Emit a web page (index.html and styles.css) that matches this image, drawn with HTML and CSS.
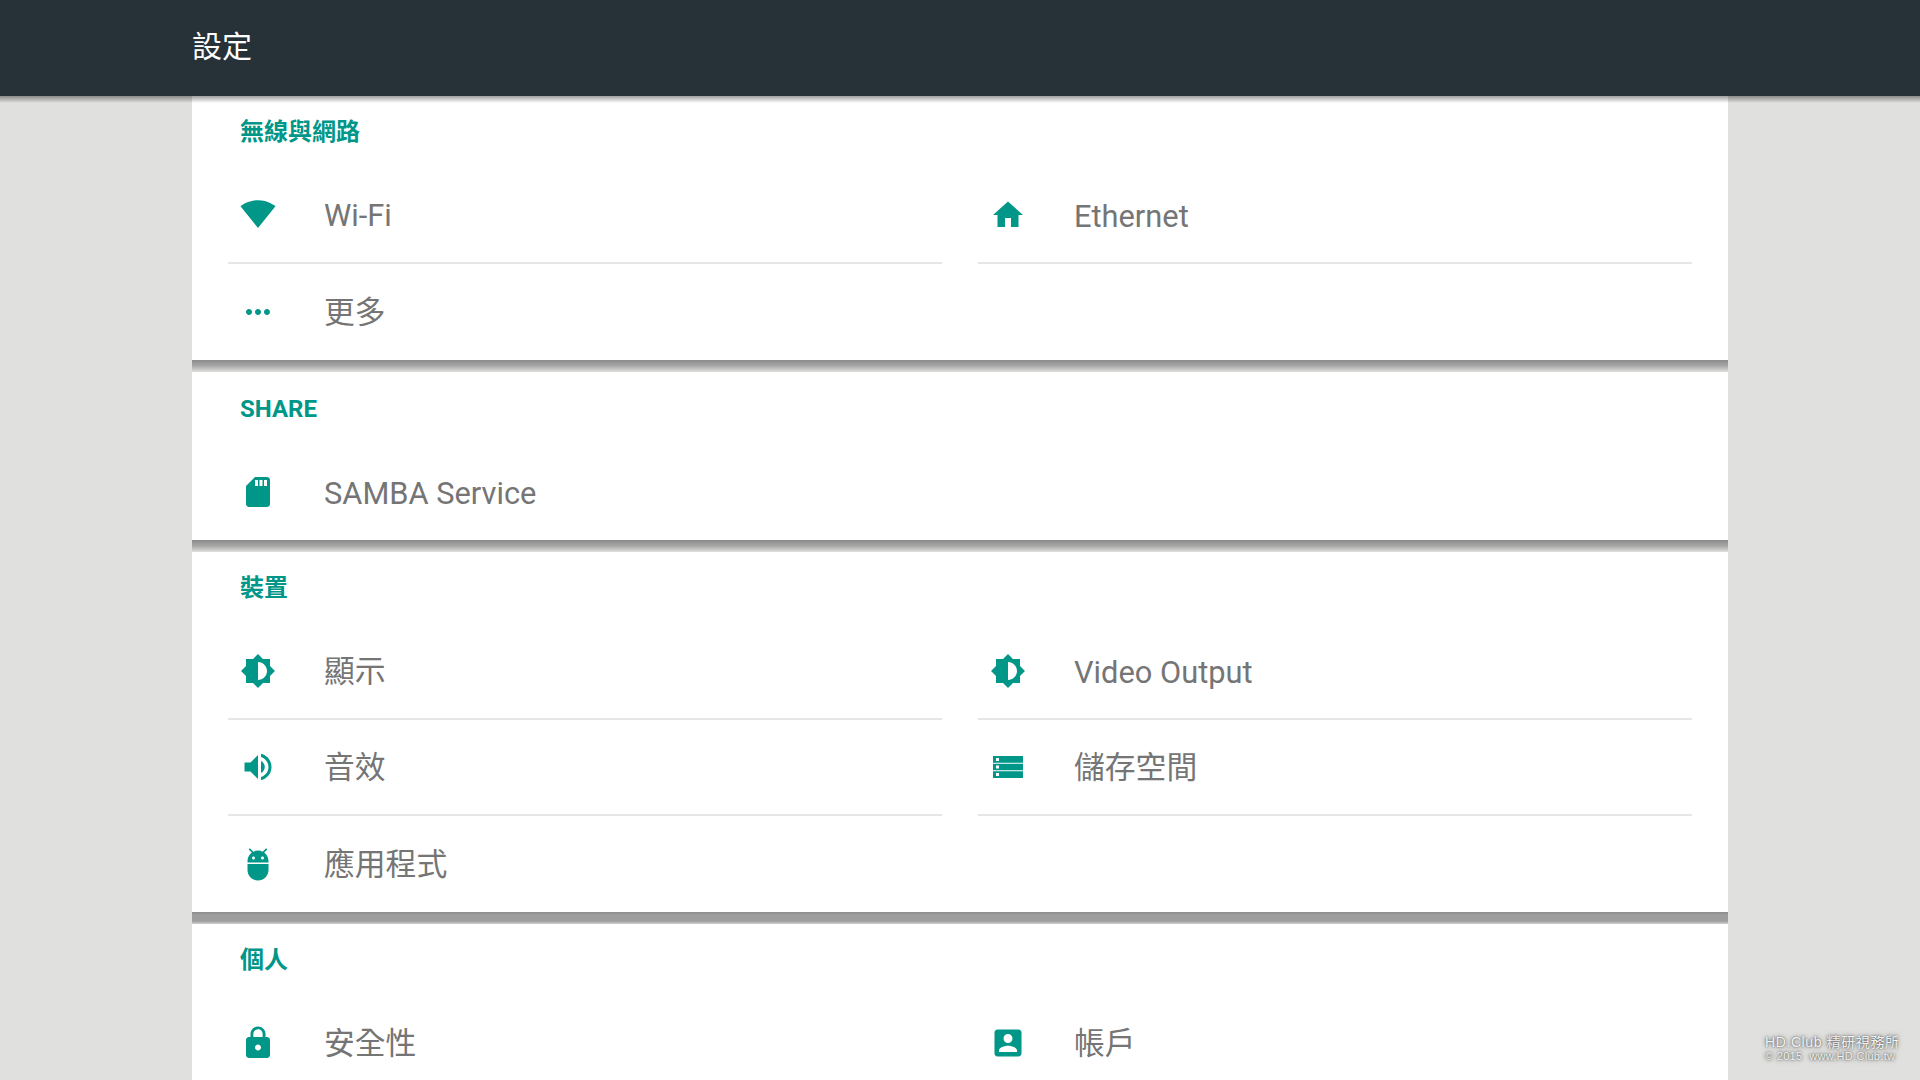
FILE: index.html
```html
<!DOCTYPE html>
<html lang="zh-Hant">
<head>
  <meta charset="UTF-8">
  <meta name="viewport" content="width=device-width, initial-scale=1.0">
  <title>設定</title>
  <link rel="stylesheet" href="styles.css">
</head>
<body>
  <!-- Action bar -->
  <header class="action-bar">
    <h1 class="action-title">設定</h1>
  </header>

  <main class="panel">
    <!-- Wireless -->
    <section class="group">
      <h2 class="group-title">無線與網路</h2>
      <div class="items">
        <div class="item ruled">
          <svg class="icon" viewBox="0 0.9 24 24"><path d="M12.01 21.49L23.64 7c-.45-.34-4.93-4-11.64-4C5.28 3 .81 6.66.36 7l11.63 14.49.01.01.01-.01z"/></svg>
          <span>Wi-Fi</span>
        </div>
        <div class="item ruled">
          <svg class="icon" viewBox="0 0 24 24"><path d="M10 20v-6h4v6h5v-8h3L12 3 2 12h3v8z"/></svg>
          <span class="latin">Ethernet</span>
        </div>
        <div class="item">
          <svg class="icon" viewBox="0 0 24 24"><path d="M6 10c-1.1 0-2 .9-2 2s.9 2 2 2 2-.9 2-2-.9-2-2-2zm12 0c-1.1 0-2 .9-2 2s.9 2 2 2 2-.9 2-2-.9-2-2-2zm-6 0c-1.1 0-2 .9-2 2s.9 2 2 2 2-.9 2-2-.9-2-2-2z"/></svg>
          <span class="zh">更多</span>
        </div>
      </div>
    </section>
    <div class="group-gap"></div>

    <!-- Share -->
    <section class="group">
      <h2 class="group-title latin-title">SHARE</h2>
      <div class="items">
        <div class="item">
          <svg class="icon" viewBox="0 0 24 24"><path d="M18 2h-8L4.02 8 4 20c0 1.1.9 2 2 2h12c1.1 0 2-.9 2-2V4c0-1.1-.9-2-2-2zm-6 6h-2V4h2v4zm3 0h-2V4h2v4zm3 0h-2V4h2v4z"/></svg>
          <span class="latin">SAMBA Service</span>
        </div>
      </div>
    </section>
    <div class="group-gap"></div>

    <!-- Device -->
    <section class="group">
      <h2 class="group-title">裝置</h2>
      <div class="items">
        <div class="item ruled">
          <svg class="icon" viewBox="0 0 24 24"><path d="M20 15.31L23.31 12 20 8.69V4h-4.69L12 .69 8.69 4H4v4.69L.69 12 4 15.31V20h4.69L12 23.31 15.31 20H20v-4.69zM12 18V6c3.31 0 6 2.69 6 6s-2.69 6-6 6z"/></svg>
          <span class="zh">顯示</span>
        </div>
        <div class="item ruled">
          <svg class="icon" viewBox="0 0 24 24"><path d="M20 15.31L23.31 12 20 8.69V4h-4.69L12 .69 8.69 4H4v4.69L.69 12 4 15.31V20h4.69L12 23.31 15.31 20H20v-4.69zM12 18V6c3.31 0 6 2.69 6 6s-2.69 6-6 6z"/></svg>
          <span class="latin">Video Output</span>
        </div>
        <div class="item ruled">
          <svg class="icon" viewBox="0 0 24 24"><path d="M3 9v6h4l5 5V4L7 9H3zm13.5 3c0-1.77-1.02-3.29-2.5-4.03v8.05c1.48-.73 2.5-2.25 2.5-4.02zM14 3.23v2.06c2.89.86 5 3.54 5 6.71s-2.11 5.85-5 6.71v2.06c4.01-.91 7-4.49 7-8.77s-2.99-7.86-7-8.77z"/></svg>
          <span class="zh">音效</span>
        </div>
        <div class="item ruled">
          <svg class="icon" viewBox="0 0 24 24"><path d="M2 19.3h20v-4.5H2v4.5zm2-3.3h2v2H4v-2zM2 4.7v4.5h20V4.7H2zm4 3.3H4V6h2v2zm-4 6.2h20V9.8H2v4.4zm2-3.2h2v2H4v-2z"/></svg>
          <span class="zh">儲存空間</span>
        </div>
        <div class="item">
          <svg class="icon" viewBox="0 0 24 24"><path d="M5 16c0 3.87 3.13 7 7 7s7-3.13 7-7v-4H5v4zM16.12 4.37l2.1-2.1-.82-.83-2.3 2.31C14.16 3.28 13.12 3 12 3s-2.16.28-3.09.75L6.6 1.44l-.82.83 2.1 2.1C6.14 5.64 5 7.68 5 10v1h14v-1c0-2.32-1.14-4.36-2.88-5.63zM9 9c-.55 0-1-.45-1-1s.45-1 1-1 1 .45 1 1-.45 1-1 1zm6 0c-.55 0-1-.45-1-1s.45-1 1-1 1 .45 1 1-.45 1-1 1z"/></svg>
          <span class="zh">應用程式</span>
        </div>
      </div>
    </section>
    <div class="group-gap dark"></div>

    <!-- Personal -->
    <section class="group">
      <h2 class="group-title">個人</h2>
      <div class="items">
        <div class="item ruled">
          <svg class="icon" viewBox="0 0 24 24"><path d="M18 8h-1V6c0-2.76-2.24-5-5-5S7 3.24 7 6v2H6c-1.1 0-2 .9-2 2v10c0 1.1.9 2 2 2h12c1.1 0 2-.9 2-2V10c0-1.1-.9-2-2-2zm-6 9c-1.1 0-2-.9-2-2s.9-2 2-2 2 .9 2 2-.9 2-2 2zm3.1-9H8.9V6c0-1.71 1.39-3.1 3.1-3.1 1.71 0 3.1 1.39 3.1 3.1v2z"/></svg>
          <span class="zh">安全性</span>
        </div>
        <div class="item ruled">
          <svg class="icon" viewBox="0 0 24 24"><path d="M3 5v14c0 1.1.89 2 2 2h14c1.1 0 2-.9 2-2V5c0-1.1-.9-2-2-2H5c-1.11 0-2 .9-2 2zm12 4c0 1.66-1.34 3-3 3s-3-1.34-3-3 1.34-3 3-3 3 1.34 3 3zm-9 8c0-2 4-3.1 6-3.1s6 1.1 6 3.1v1H6v-1z"/></svg>
          <span class="zh">帳戶</span>
        </div>
      </div>
    </section>
  </main>

  <!-- Watermark -->
  <div class="watermark">
    <div class="watermark-name">HD.Club 精研視務所</div>
    <div class="watermark-site">© 2015&nbsp; www.HD.Club.tw</div>
  </div>
</body>
</html>
```

FILE: styles.css
```css
html, body {
  height: 100%;
}
body {
  margin: 0;
  height: 1080px;
  overflow: hidden;
  background: #e0e0de;
  font-family: Roboto, "Noto Sans CJK TC", sans-serif;
}
.action-bar {
  position: relative;
  z-index: 2;
  display: flex;
  align-items: center;
  height: 96px;
  box-sizing: border-box;
  padding: 0 0 8px 192px;
  background: #263238;
}
.action-bar::after {
  content: "";
  position: absolute;
  left: 0;
  right: 0;
  top: 100%;
  height: 7px;
  background: linear-gradient(to bottom, rgba(0, 0, 0, 0.38), rgba(0, 0, 0, 0));
}
.action-title {
  margin: 0;
  font-size: 30px;
  font-weight: 400;
  color: #fff;
}
.panel {
  width: 1536px;
  margin: 0 auto;
  background: #fff;
}
.group-title {
  margin: 0;
  height: 72px;
  padding: 0 0 5px 48px;
  box-sizing: border-box;
  display: flex;
  align-items: center;
  font-size: 24px;
  font-weight: 700;
  color: #009688;
}
.latin-title {
  padding: 2px 0 0 48px;
}
.items {
  display: grid;
  grid-template-columns: 714px 714px;
  column-gap: 36px;
  padding: 0 36px;
}
.item {
  display: flex;
  align-items: center;
  height: 96px;
  box-sizing: border-box;
  padding-left: 12px;
  font-size: 30.8px;
  color: #757575;
}
.item.ruled {
  border-bottom: 2px solid #e6e6e6;
}
.latin {
  padding-top: 2px;
}
.zh {
  padding-bottom: 5px;
}
.icon {
  flex: none;
  width: 36px;
  height: 36px;
  margin-right: 48px;
  fill: #009688;
}
.group-gap {
  height: 12px;
  background: linear-gradient(to bottom, #8a8a8a, #a8a8a8 50%, #e0e0de);
}
.group-gap.dark {
  background: linear-gradient(to bottom, #8a8a8a, #9e9e9e 25%, #9e9e9e 75%, #d0d0d0);
}
.watermark {
  position: absolute;
  left: 1765px;
  top: 1035px;
  color: #f2f2f2;
  font-family: "Liberation Sans", "Noto Sans CJK TC", sans-serif;
  text-shadow: 0 0 2px rgba(0, 0, 0, 0.6), 0 0 5px rgba(0, 0, 0, 0.5);
  white-space: nowrap;
}
.watermark-name {
  font-size: 14px;
  line-height: 15px;
  letter-spacing: 0.6px;
}
.watermark-site {
  font-size: 11px;
  line-height: 13px;
  letter-spacing: 0.3px;
}
```
